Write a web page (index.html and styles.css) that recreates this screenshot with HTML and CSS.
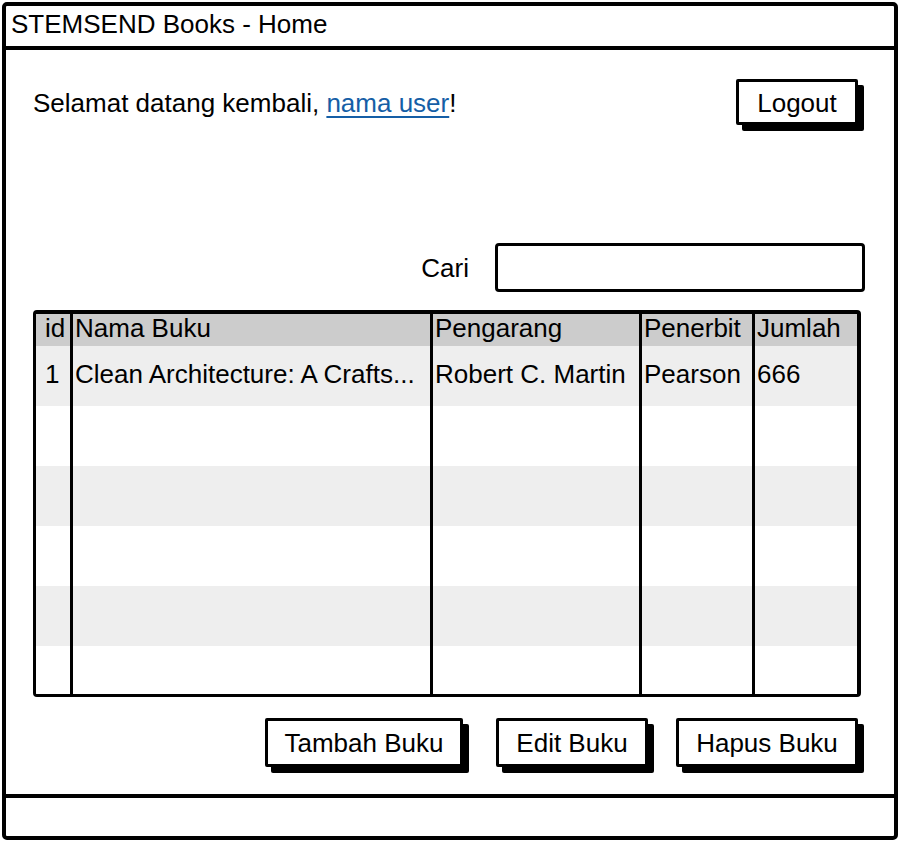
FILE: index.html
```html
<!DOCTYPE html>
<html lang="id">
<head>
<meta charset="utf-8">
<title>STEMSEND Books - Home</title>
<link rel="stylesheet" href="styles.css">
</head>
<body>
<div class="window">
  <div class="titlebar">STEMSEND Books - Home</div>
  <div class="content">
    <div class="welcome-row">
      <p class="welcome">Selamat datang kembali, <a href="#" class="user-link">nama user</a>!</p>
      <button class="btn btn-logout" type="button">Logout</button>
    </div>
    <div class="search-row">
      <label class="search-label" for="cari">Cari</label>
      <input id="cari" class="search-input" type="text">
    </div>
    <div class="table">
      <div class="row row-head">
        <div class="cell cell-id">id</div>
        <div class="cell">Nama Buku</div>
        <div class="cell">Pengarang</div>
        <div class="cell">Penerbit</div>
        <div class="cell">Jumlah</div>
      </div>
      <div class="row row-alt">
        <div class="cell cell-id">1</div>
        <div class="cell">Clean Architecture: A Crafts...</div>
        <div class="cell">Robert C. Martin</div>
        <div class="cell">Pearson</div>
        <div class="cell">666</div>
      </div>
      <div class="row">
        <div class="cell cell-id"></div><div class="cell"></div><div class="cell"></div><div class="cell"></div><div class="cell"></div>
      </div>
      <div class="row row-alt">
        <div class="cell cell-id"></div><div class="cell"></div><div class="cell"></div><div class="cell"></div><div class="cell"></div>
      </div>
      <div class="row">
        <div class="cell cell-id"></div><div class="cell"></div><div class="cell"></div><div class="cell"></div><div class="cell"></div>
      </div>
      <div class="row row-alt">
        <div class="cell cell-id"></div><div class="cell"></div><div class="cell"></div><div class="cell"></div><div class="cell"></div>
      </div>
      <div class="row row-last">
        <div class="cell cell-id"></div><div class="cell"></div><div class="cell"></div><div class="cell"></div><div class="cell"></div>
      </div>
    </div>
    <div class="actions">
      <button class="btn btn-add" type="button">Tambah Buku</button>
      <button class="btn btn-edit" type="button">Edit Buku</button>
      <button class="btn btn-delete" type="button">Hapus Buku</button>
    </div>
  </div>
  <div class="footer"></div>
</div>
</body>
</html>
```
FILE: styles.css
```css
* {
  box-sizing: border-box;
}

html, body {
  margin: 0;
  padding: 0;
  background: #ffffff;
}

body {
  font-family: "Liberation Sans", Arial, sans-serif;
  font-size: 26px;
  color: #000000;
}

.window {
  margin: 2px 0 0 2px;
  width: 896px;
  height: 838px;
  border: 4px solid #000000;
  border-radius: 5px;
  display: flex;
  flex-direction: column;
  overflow: hidden;
}

.titlebar {
  height: 44px;
  border-bottom: 4px solid #000000;
  padding-left: 5px;
  line-height: 36px;
  white-space: nowrap;
}

.content {
  flex: 1;
  display: flex;
  flex-direction: column;
  padding: 0 29px 0 27px;
}

.welcome-row {
  margin-top: 29px;
  height: 46px;
  display: flex;
  align-items: center;
  justify-content: space-between;
}

.welcome {
  margin: 0;
  padding-top: 2px;
}

.user-link {
  color: #155ea6;
  text-decoration: underline;
  text-decoration-thickness: 2px;
  text-underline-offset: 4px;
}

.btn {
  font-family: "Liberation Sans", Arial, sans-serif;
  font-size: 26px;
  color: #000000;
  background: #ffffff;
  border: 3px solid #000000;
  border-radius: 2px;
  box-shadow: 6px 6px 0 #000000;
  padding: 0;
  margin: 0;
  line-height: 1;
}

.btn-logout {
  width: 122px;
  height: 46px;
  margin-right: 7px;
  padding-top: 2px;
}

.search-row {
  margin-top: 118px;
  display: flex;
  align-items: center;
  justify-content: flex-end;
  gap: 26px;
}

.search-label {
  line-height: 1;
}

.search-input {
  width: 370px;
  height: 49px;
  border: 3px solid #000000;
  border-radius: 4px;
  background: #ffffff;
  padding: 0 8px;
  margin: 0;
  font-family: "Liberation Sans", Arial, sans-serif;
  font-size: 26px;
}

.table {
  margin-top: 18px;
  margin-right: 4px;
  border-style: solid;
  border-color: #000000;
  border-width: 4px 4px 3px 3px;
  border-radius: 4px;
  overflow: hidden;
}

.row {
  display: grid;
  grid-template-columns: 34px 360px 209px 113px 105px;
  height: 60px;
  line-height: 56px;
  background: #ffffff;
}

.row-head {
  height: 32px;
  line-height: 29px;
  background: #cccccc;
}

.row-alt {
  background: #eeeeee;
}

.row-last {
  height: 48px;
}

.cell {
  border-left: 3px solid #000000;
  padding-left: 2px;
  white-space: nowrap;
  overflow: hidden;
}

.cell-id {
  border-left: none;
  padding-left: 9px;
}

.actions {
  margin-top: 21px;
  display: flex;
  justify-content: flex-end;
  padding-right: 7px;
}

.btn-add {
  width: 198px;
  height: 49px;
}

.btn-edit {
  width: 152px;
  height: 49px;
  margin-left: 33px;
}

.btn-delete {
  width: 182px;
  height: 49px;
  margin-left: 28px;
}

.footer {
  height: 42px;
  border-top: 4px solid #000000;
  flex-shrink: 0;
}
```
